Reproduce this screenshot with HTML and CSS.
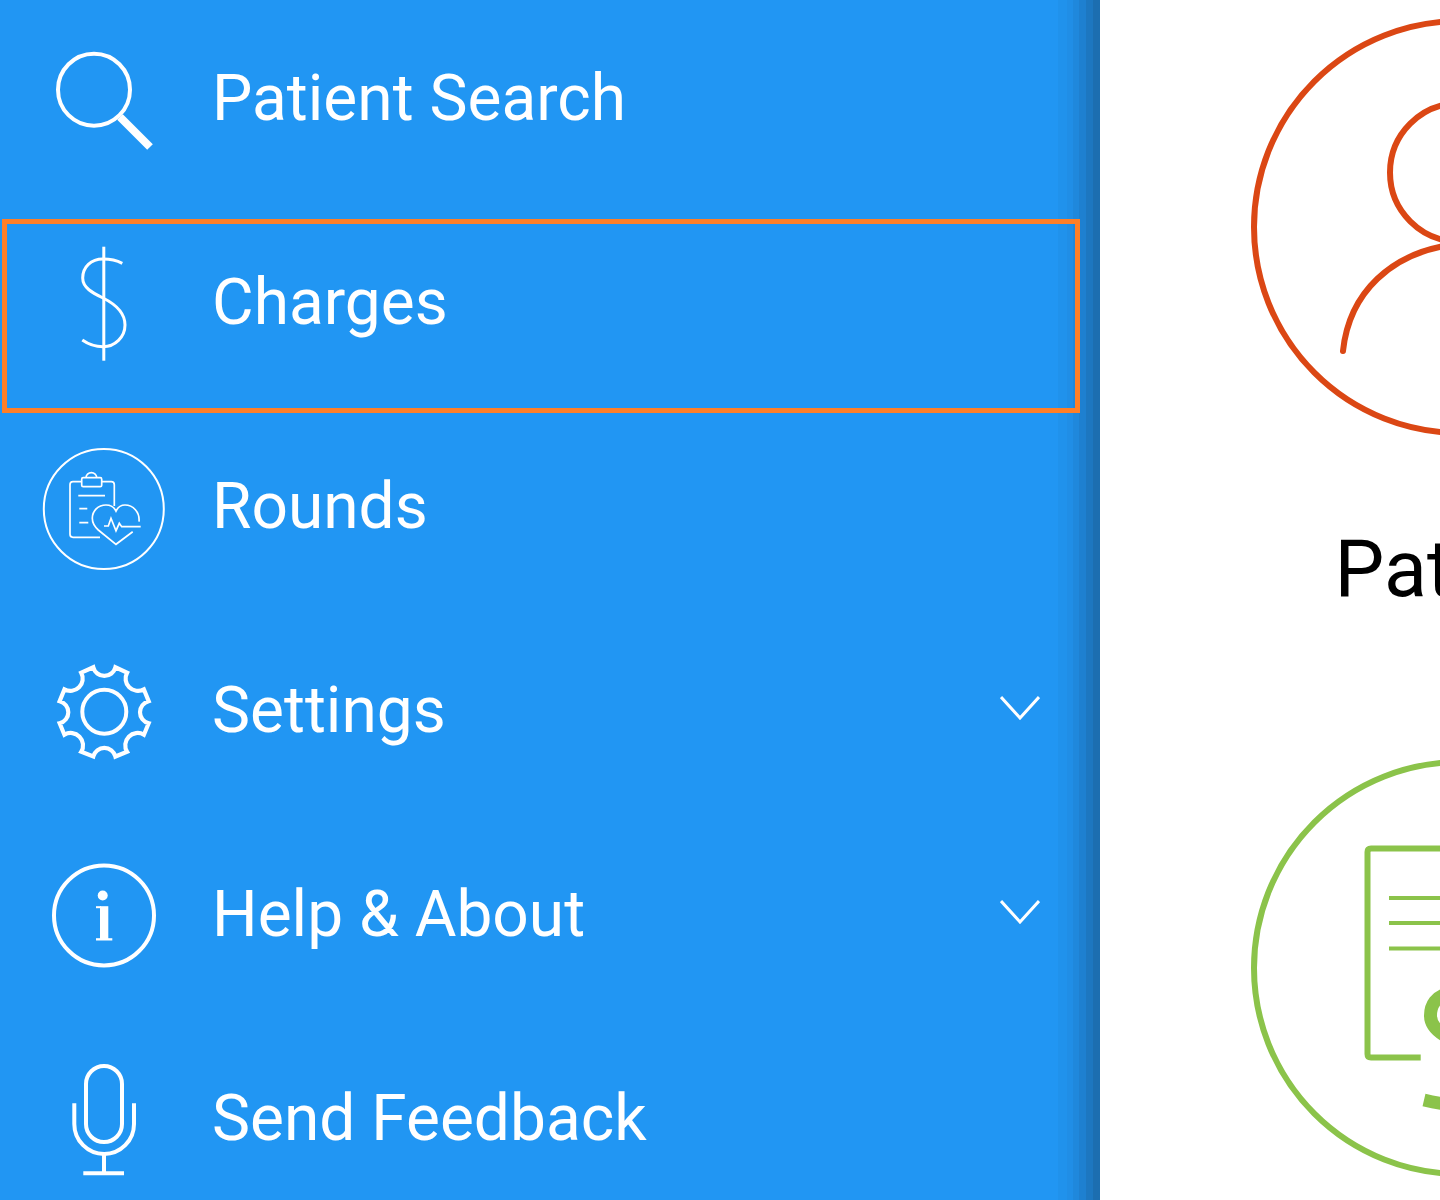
FILE: index.html
```html
<!DOCTYPE html>
<html lang="en">
  <head>
    <meta charset="UTF-8" />
    <meta name="viewport" content="width=device-width, initial-scale=1.0" />
    <title>Charges</title>

    <link rel="stylesheet" href="styles.css">
  </head>
  <body>
    <nav class="sidebar">
      <a class="menu-item">
        <svg class="menu-icon" viewBox="0 0 122 122">
          <circle cx="51" cy="53.7" r="36" stroke-width="4" />
          <path d="M77 81L107 111" stroke-width="8" />
        </svg>
        <span class="menu-label">Patient Search</span>
      </a>

      <a class="menu-item menu-item-focus">
        <svg class="menu-icon" viewBox="0 0 122 122">
          <path d="M60.8 6.7V120.7" stroke-width="3" />
          <path d="M79.3 23.3C73 20 66 19 60 19C48 19 39.7 27 39.7 38C39.7 48 50 53 60 58C72 64 82 72 82 85C82 97 72 106.7 60 106.7C52 106.7 45 104 39.3 100" stroke-width="3" />
        </svg>
        <span class="menu-label">Charges</span>
      </a>

      <a class="menu-item">
        <svg class="menu-icon" viewBox="0 0 122 122">
          <circle cx="60.8" cy="65" r="60" stroke-width="2" />
          <g stroke-width="1.7">
            <path d="M71.3 62V40.7Q71.3 37.7 68.3 37.7H58.7M38.7 37.7H30Q27 37.7 27 40.7V90.3Q27 93.3 30 93.3H57" />
            <rect x="38.7" y="33.7" width="20" height="9" rx="1.5" />
            <path d="M43 33.7A5.3 5 0 0 1 53.7 33.7" />
            <path d="M35.3 51.7H62M36.3 64.7H44.3M36.3 78.7H45.3" />
            <path d="M96 77.7C97 68 90 61 82 61C78 61 75 63 73 67C71 63 67 61 63 61C55 61 49.3 67 49.3 74.3C49.3 79 52 83 55.3 86L73 100.3L89.7 87.7" />
            <path d="M61 82H65.3L68 74.3L73 86.7L76.3 79.3L78.7 82.7H97.7" />
          </g>
        </svg>
        <span class="menu-label">Rounds</span>
      </a>

      <a class="menu-item">
        <svg class="menu-icon" viewBox="0 0 122 122">
          <circle cx="61.3" cy="63.7" r="22" stroke-width="4" />
          <path transform="translate(61.2 63.9) scale(.95) translate(-61.2 -64)" d="M49.7 17A12 12 0 0 0 73 17L85.3 22.7A13 13 0 0 0 103 40.3L108 52.7A12 12 0 0 0 108 76L103 88A13 13 0 0 0 85.3 106L73 111A12 12 0 0 0 49.7 111L37 106A13 13 0 0 0 19.3 88L14.3 76A12 12 0 0 0 14.3 52.7L19.3 40.3A13 13 0 0 0 37 22.7Z" stroke-width="4.4" />
        </svg>
        <span class="menu-label">Settings</span>
        <svg class="menu-chevron" viewBox="0 0 40 24">
          <path d="M1 1L20 22L39 1" stroke-width="3" />
        </svg>
      </a>

      <a class="menu-item">
        <svg class="menu-icon" viewBox="0 0 122 122">
          <circle cx="61" cy="63.4" r="50" stroke-width="4" />
          <g class="icon-solid">
            <circle cx="59.7" cy="43.5" r="5" />
            <rect x="57" y="54.2" width="8.3" height="33" />
            <rect x="53" y="54.2" width="5" height="2" />
            <rect x="53" y="86.2" width="16.3" height="2.3" />
          </g>
        </svg>
        <span class="menu-label">Help &amp; About</span>
        <svg class="menu-chevron" viewBox="0 0 40 24">
          <path d="M1 1L20 22L39 1" stroke-width="3" />
        </svg>
      </a>

      <a class="menu-item">
        <svg class="menu-icon" viewBox="0 0 122 122">
          <rect x="43" y="10" width="36" height="76" rx="18" stroke-width="4" />
          <path d="M31.3 47.3V68A29.85 30 0 0 0 91 68V47.3" stroke-width="4" />
          <path d="M61 98V116M40.3 117.3H81" stroke-width="4" />
        </svg>
        <span class="menu-label">Send Feedback</span>
      </a>
    </nav>

    <main class="tiles">
      <div class="tile">
        <svg class="tile-icon tile-icon-patient" viewBox="0 0 416 416">
          <circle cx="209" cy="208" r="206" />
          <circle cx="208" cy="153.5" r="69" />
          <path d="M92 332C98 275 139 232 208 225C277 232 318 275 324 332" />
        </svg>
        <div class="tile-label">Patient</div>
      </div>

      <div class="tile">
        <svg class="tile-icon tile-icon-charges" viewBox="0 0 416 416">
          <circle cx="209" cy="208" r="206" />
          <path d="M169.7 297.5H120Q116.5 297.5 116.5 294V92Q116.5 88.5 120 88.5H300V190" />
          <path d="M138 138H280" stroke-width="4" />
          <path d="M138 163H280" stroke-width="4" />
          <path d="M138 188.5H280" stroke-width="4" />
          <path d="M230 236C205 228 179.5 232 179.5 255.5C179.5 272 200 280 225 288C250 296 260 310 255 325C250 345 225 352 173 340" stroke-width="13" />
        </svg>
      </div>
    </main>
  </body>
</html>
```

FILE: styles.css
```css
html,
body {
  height: 100%;
}

body {
  margin: 0;
  height: 1200px;
  display: flex;
  overflow: hidden;
  background-color: white;
  font-family: Roboto, Arial, sans-serif;
}

.sidebar {
  width: 1100px;
  height: 1200px;
  flex-shrink: 0;
  overflow: hidden;
  background: linear-gradient(
    to right,
    #2196f3 1058px,
    #2092ec 1058px 1067px,
    #208ee6 1067px 1073px,
    #1f88dc 1073px 1079px,
    #1e80d0 1079px 1086px,
    #1d77c0 1086px 1093px,
    #1c6eb0 1093px
  );
}

.menu-item {
  position: relative;
  display: flex;
  align-items: center;
  height: 204px;
  padding-right: 60px;
  color: white;
}

.menu-item:first-child {
  margin-top: -5px;
}

.menu-item-focus::after {
  content: "";
  position: absolute;
  top: 20px;
  left: 2px;
  width: 1068px;
  height: 184px;
  border: 5px solid #ff7f27;
}

.menu-icon {
  width: 122px;
  height: 122px;
  flex-shrink: 0;
  margin: 0 47px 0 43px;
  overflow: visible;
  fill: none;
  stroke: white;
}

.icon-solid {
  fill: white;
  stroke: none;
}

.menu-label {
  padding-top: 2px;
  font-size: 64px;
  white-space: nowrap;
}

.menu-chevron {
  width: 40px;
  height: 24px;
  flex-shrink: 0;
  margin-left: auto;
  margin-bottom: 2px;
  fill: none;
  stroke: white;
}

.tiles {
  flex: 1;
  min-width: 0;
  padding-left: 151px;
}

.tile {
  width: 416px;
  height: 740px;
  padding-top: 19px;
  box-sizing: border-box;
}

.tile:last-child {
  padding-top: 20px;
  height: 460px;
}

.tile-icon {
  display: block;
  width: 416px;
  height: 416px;
  overflow: visible;
  fill: none;
  stroke-width: 6;
  stroke-linecap: round;
}

.tile-icon-patient {
  stroke: #db4714;
}

.tile-icon-charges {
  stroke: #8bc34a;
  stroke-linecap: butt;
}

.tile-label {
  margin-top: 84px;
  font-size: 79px;
  line-height: 100px;
  color: black;
  text-align: center;
  white-space: nowrap;
}
```
